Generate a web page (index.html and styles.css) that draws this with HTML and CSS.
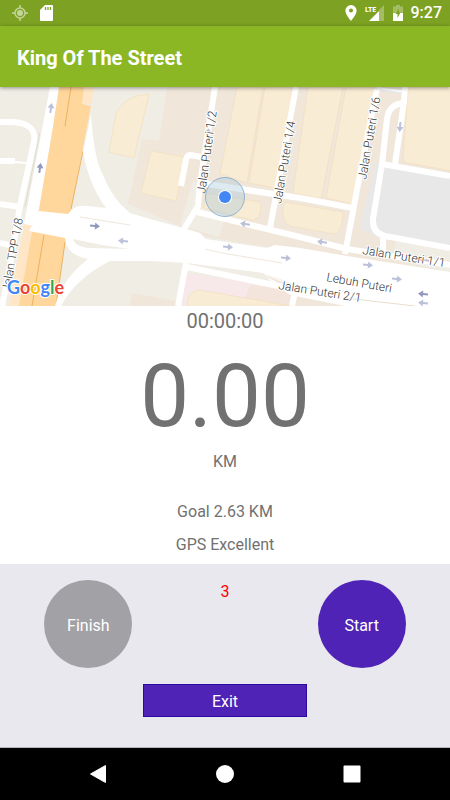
FILE: index.html
```html
<!DOCTYPE html>
<html lang="en">

<head>
    <meta charset="UTF-8">
    <meta name="viewport" content="width=device-width, initial-scale=1.0">
    <title>King Of The Street</title>
    <link rel="stylesheet" href="styles.css">
</head>

<body>
    <div class="status-bar">
        <svg class="icon" width="16" height="16" viewBox="0 0 16 16">
            <g fill="none" stroke="#c5d59a">
                <circle cx="8" cy="8" r="5" stroke-width="1.5" />
                <path d="M8 0v3M8 13v3M0 8h3M13 8h3" stroke-width="1.5" />
            </g>
            <circle cx="8" cy="8" r="3" fill="#c5d59a" />
        </svg>
        <svg class="icon" width="13" height="16" viewBox="0 0 13 16">
            <path d="M5 0h7a1 1 0 0 1 1 1v14a1 1 0 0 1-1 1H1a1 1 0 0 1-1-1V5z" fill="#fff" />
            <path d="M5.500 2v3M8 2v3M10.500 2v3" stroke="#7da122" stroke-width="1.300" />
        </svg>
        <div class="status-right">
            <svg class="icon" width="12" height="16" viewBox="0 0 12 16">
                <path d="M6 0a5.600 5.600 0 0 0-5.600 5.600C.4 9.800 6 16 6 16s5.600-6.200 5.600-10.400A5.600 5.600 0 0 0 6 0zm0 7.600a2 2 0 1 1 0-4 2 2 0 0 1 0 4z" fill="#fff" />
            </svg>
            <svg class="icon" width="20" height="16" viewBox="0 0 20 16">
                <path d="M19 0v16H14V5z" fill="#a4bd64" />
                <path d="M14 6v10H4z" fill="#fff" />
                <text class="lte" x="0" y="7">LTE</text>
            </svg>
            <svg class="icon" width="10" height="16" viewBox="0 0 10 16">
                <path d="M3 0h4v1.500h3V8H0V1.500h3z" fill="#a4bd64" />
                <path d="M0 8h10v8H0z" fill="#fff" />
                <path d="M6 3.500L2.500 9h2v4L7.500 7.500H6z" fill="#7da122" />
            </svg>
            <span class="clock">9:27</span>
        </div>
    </div>

    <header class="app-bar">
        <h1>King Of The Street</h1>
    </header>

    <main>
        <div class="map">
            <svg viewBox="0 0 450 219" preserveAspectRatio="xMidYMid slice">
                <rect width="450" height="219" fill="#efede4" />

                <!-- blocks -->
                <path d="M167 0H450V184L300 165L205 150L184 141L128 117L142 52L159 53z" fill="#f0e7da" />
                <path d="M193 94L204 97L198 119L225 131L219 150L180 138z" fill="#efede4" />
                <path d="M375 75L450 91V162L378 150L360 142z" fill="#e8e8e8" />
                <path d="M378 0L408 3L406 7L377 4z" fill="#e8e8e8" />
                <path d="M396 154L450 164V185L392 173z" fill="#efede4" />
                <path d="M187 186L300 203V219H180z" fill="#f7e9ea" />
                <path d="M250 198L300 205V219H242z" fill="#f4e5dc" />
                <path d="M132 206L178 214V219H129zM295 201L450 212V219H290z" fill="#f0e7da" />

                <!-- buildings -->
                <g fill="#f9ecd4" stroke="#f1dcb8" stroke-width=".6">
                    <path d="M116 26Q126 8 149 7L134 71L109 65z" />
                    <path d="M151 64L185 70L176 114L141 106z" />
                    <path d="M237 0H263L247 96L220 87z" />
                    <path d="M265 0H293L275 101L249 96z" />
                    <path d="M308 0H343L321 112L293 106z" />
                    <path d="M346 0H375L352 117L326 111z" />
                    <path d="M408 0H451V84L403 75z" />
                    <path d="M206 106L260 115Q263 132 252 133L204 121z" />
                    <path d="M284 115L343 125Q343 142 335 147L290 139Q280 135 284 115z" />
                    <path d="M187 220Q187 203 200 203L290 219z" />
                </g>

                <!-- highway -->
                <path d="M50 0H60L38 128L29 144L24 137z" fill="#fff" />
                <path d="M59 0H84L83 17L91 19L71 124L68 129L38 128L52 46z" fill="#ffd79d" />
                <path d="M84 0H94L91 17H82zM24 137L34 139L20 219H9z" fill="#ffe6c6" />
                <path d="M33 139L66 150L56 219H19z" fill="#ffd79d" />
                <path d="M71 0L65 39M44 148L32 219M83 64L71 122M65 155L56 219" fill="none" stroke="#e9a84c" stroke-width=".8" />

                <!-- main road -->
                <path d="M39 124L68 127Q75 117 87 119L106 121Q89 98 83 65L91 27Q94 73 103 88Q112 112 130 126L150 132L183 141L200 146L206 152L267 161L275 158L300 161L347 169L450 185V219H345L280 192L263 186L187 176L150 174H110Q75 192 61 219H55Q62 192 88 172Q66 168 65 151L29 144z" fill="#fff" />
                <path d="M73 152Q75 160 90 161L130 162L102 158z" fill="#efede4" />
                <path d="M205 162L222 166L282 176M80 130L130 138" fill="none" stroke="#e6dccb" stroke-width=".7" />
                <path d="M263 186L300 201L360 211L345 219L290 208L271 194z" fill="#fff" />
                <path d="M262 187L280 197L292 200L276 192z" fill="#f0e7da" />
                <path d="M300 199L345 211L415 219" fill="none" stroke="#e2d5c0" stroke-width=".8" />

                <!-- streets -->
                <g class="street">
                    <path d="M0 35H14Q37 37 34 55L20 119L8 190L2 219" />
                    <path d="M0 74H15M0 117L20 120M0 156L14 159" />
                    <path class="lane" d="M14 75L27 76" />
                    <path d="M215 0L200 97L198 119L184 142" />
                    <path d="M201 70L190 68Q187 68 186 73L181 99" />
                    <path d="M296 0L289 38L270 141" />
                    <path d="M200 96L300 111L353 121" />
                    <path d="M197 125L300 150L347 162L450 178" />
                    <path d="M377 2L359 92L345 167" />
                    <path class="lane" d="M377 1L407 5" />
                    <path d="M405 0L404 15L395 77" />
                    <path d="M404 16Q389 17 387 32L382 77L373 132Q372 146 385 149L450 161" />
                    <path d="M382 77L450 89M383 149V164" />
                    <path d="M187 180L293 202L345 213M186 176L178 219M295 205L292 219" />
                </g>
                <path d="M40 45L25 120" stroke="#d8d2c6" stroke-width=".7" />

                <!-- direction arrows -->
                <defs>
                    <path id="arrow" d="M-5-1H0V-3.500L5 0L0 3.500V1H-5z" />
                </defs>
                <g fill="#9299bd">
                    <use href="#arrow" transform="translate(40 81) rotate(-82)" />
                    <use href="#arrow" transform="translate(95 139) rotate(5)" />
                    <use href="#arrow" transform="translate(423 207) rotate(185)" />
                </g>
                <g fill="#bcc1da">
                    <use href="#arrow" transform="translate(51 21) rotate(-82)" />
                    <use href="#arrow" transform="translate(123 154) rotate(185)" />
                    <use href="#arrow" transform="translate(208 46) rotate(-82)" />
                    <use href="#arrow" transform="translate(245 137) rotate(188)" />
                    <use href="#arrow" transform="translate(228 160) rotate(5)" />
                    <use href="#arrow" transform="translate(286 171) rotate(5)" />
                    <use href="#arrow" transform="translate(322 155) rotate(188)" />
                    <use href="#arrow" transform="translate(400 40) rotate(95)" />
                    <use href="#arrow" transform="translate(368 178) rotate(5)" />
                    <use href="#arrow" transform="translate(397 192) rotate(5)" />
                    <use href="#arrow" transform="translate(424 173) rotate(188)" />
                    <use href="#arrow" transform="translate(423 216) rotate(185)" />
                </g>

                <!-- street names -->
                <g class="street-name">
                    <text transform="translate(10 205) rotate(-80)">Jalan TPP 1/8</text>
                    <text transform="translate(205 107) rotate(-82)">Jalan Puteri 1/2</text>
                    <text transform="translate(281 117) rotate(-80)">Jalan Puteri 1/4</text>
                    <text transform="translate(366 93) rotate(-80)">Jalan Puteri 1/6</text>
                    <text transform="translate(362 167) rotate(9)">Jalan Puteri 1/1</text>
                    <text transform="translate(326 194) rotate(10)">Lebuh Puteri</text>
                    <text transform="translate(278 202) rotate(9)">Jalan Puteri 2/1</text>
                </g>

                <!-- current position -->
                <circle cx="225" cy="110" r="19.500" fill="#9fc3d6" fill-opacity=".35" stroke="#7ba7cf" stroke-width=".8" />
                <circle cx="225" cy="110" r="7" fill="#fff" />
                <circle cx="225" cy="110" r="6" fill="#4285f4" />

                <text class="google" x="7" y="207"><tspan fill="#4285f4">G</tspan><tspan fill="#ea4335">o</tspan><tspan fill="#fbbc05">o</tspan><tspan fill="#4285f4">g</tspan><tspan fill="#34a853">l</tspan><tspan fill="#ea4335">e</tspan></text>
            </svg>
        </div>

        <div class="stats">
            <p class="timer">00:00:00</p>
            <p class="distance">0.00</p>
            <p>KM</p>
            <p class="goal">Goal 2.63 KM</p>
            <p class="gps">GPS Excellent</p>
        </div>

        <div class="controls">
            <div class="row">
                <button class="round finish" type="button">Finish</button>
                <span class="count">3</span>
                <button class="round start" type="button">Start</button>
            </div>
            <button class="exit" type="button">Exit</button>
        </div>
    </main>

    <nav class="nav-bar">
        <button type="button" aria-label="Back">
            <svg class="icon" width="18" height="18" viewBox="0 0 18 18">
                <path d="M16.500 .5v17L1.500 9z" fill="#fff" stroke="#fff" stroke-linejoin="round" />
            </svg>
        </button>
        <button type="button" aria-label="Home">
            <svg class="icon" width="18" height="18" viewBox="0 0 18 18">
                <circle cx="9" cy="9" r="9" fill="#fff" />
            </svg>
        </button>
        <button type="button" aria-label="Recent apps">
            <svg class="icon" width="18" height="18" viewBox="0 0 18 18">
                <rect x=".5" y=".5" width="17" height="17" rx="1" fill="#fff" />
            </svg>
        </button>
    </nav>
</body>

</html>
```

FILE: styles.css
```css
* {
    box-sizing: border-box;
}

body {
    font-family: Roboto, sans-serif;
    font-size: 16px;
    color: #717171;
    background-color: #fff;
    display: flex;
    flex-direction: column;
    min-height: 100vh;
    margin: 0;
}

p,
h1 {
    margin: 0;
}

button {
    font-family: inherit;
    font-size: 16px;
    color: #fff;
    padding: 2px 0 0;
    border: none;
    cursor: pointer;
}

.icon {
    display: block;
    flex: none;
}

/* top bars */

.status-bar {
    display: flex;
    align-items: center;
    gap: 12px;
    height: 26px;
    padding: 0 8px 0 12px;
    background-color: #7da122;
}

.status-right {
    display: flex;
    align-items: center;
    gap: 8px;
    margin-left: auto;
}

.clock {
    color: #fff;
    font-weight: 500;
    line-height: 28px;
}

.lte {
    font-family: "Roboto Condensed", "DejaVu Sans Condensed", sans-serif;
    font-size: 8px;
    font-weight: bold;
    fill: #fff;
}

.app-bar {
    position: relative;
    display: flex;
    align-items: center;
    height: 61px;
    padding: 2px 17px 0;
    background-color: #8bb725;
    box-shadow: 0 1px 4px rgba(0, 0, 0, 0.4);
}

h1 {
    color: #fff;
    font-size: 20px;
    font-weight: bold;
}

main {
    flex: 1;
    display: flex;
    flex-direction: column;
}

/* map */

.map svg {
    display: block;
    width: 100%;
}

.street {
    fill: none;
    stroke: #fff;
    stroke-width: 6px;
}

.street .lane {
    stroke-width: 2px;
}

.street-name {
    font-size: 12px;
    font-weight: 300;
    fill: #333;
    stroke: #fff;
    stroke-width: 2px;
    paint-order: stroke;
}

.google {
    font-family: Lato, sans-serif;
    font-size: 18px;
    font-weight: bold;
    stroke: #fff;
    stroke-width: 2px;
    paint-order: stroke;
}

/* run numbers */

.stats {
    padding: 1px 0 6px;
    text-align: center;
    line-height: 26px;
}

.timer {
    font-size: 20px;
    line-height: 28px;
    margin-bottom: 8px;
}

.distance {
    font-size: 87px;
    line-height: 106px;
}

.goal {
    margin-top: 24px;
}

.gps {
    margin-top: 7px;
}

/* buttons */

.controls {
    flex: 1;
    display: flex;
    flex-direction: column;
    align-items: center;
    gap: 16px;
    padding: 16px 20px;
    background-color: #e9e8ee;
    border-bottom: 1px solid #b5b9bb;
}

.row {
    display: grid;
    grid-template-columns: 1fr 1fr 1fr;
    justify-items: center;
    width: 100%;
}

.round {
    width: 88px;
    height: 88px;
    border-radius: 50%;
}

.finish {
    background-color: #a2a1a6;
}

.start {
    background-color: #4f23b5;
}

.count {
    color: #f00;
    line-height: 24px;
}

.exit {
    width: 40%;
    height: 33px;
    background-color: #4f23b5;
    border: 1px solid #2a08a4;
}

.nav-bar {
    display: grid;
    grid-template-columns: 1fr 1fr 1fr;
    height: 52px;
    padding: 0 35px;
    background-color: #000;
}

.nav-bar button {
    display: flex;
    align-items: center;
    justify-content: center;
    padding: 0;
    background: none;
}
```
